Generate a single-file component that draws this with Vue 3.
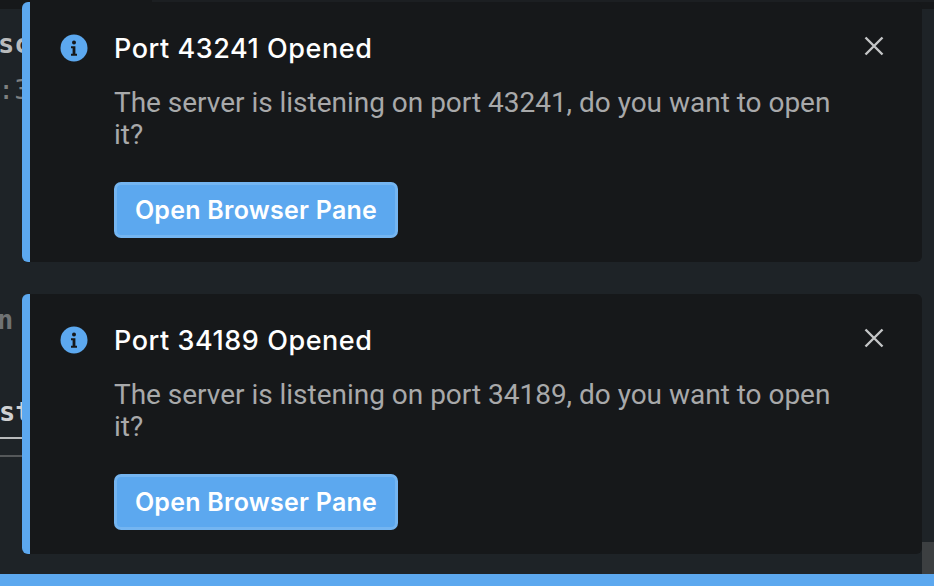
<template>
  <div class="screen">
    <div class="topbar"></div>
    <div class="topbar-tab"></div>

    <!-- what shows of the page behind the notifications -->
    <div class="behind">
      <span class="peek peek-sc">sc</span>
      <span class="peek peek-port">:3</span>
      <span class="peek peek-n">n</span>
      <span class="peek peek-st">st</span>
      <div class="peek-line"></div>
      <div class="peek-line2"></div>
    </div>

    <div class="scrollbar"></div>

    <div class="stack">
      <div v-for="port in ports" :key="port" class="toast">
        <div class="head">
          <svg class="info" viewBox="0 0 28 28" width="28" height="28">
            <circle cx="14" cy="14" r="13.5" fill="#5ca8ef" />
            <circle cx="14" cy="8.6" r="2" fill="#16181a" />
            <path d="M11 12.2h4.4v7.6h1.6v2h-6v-2h1.6v-5.6h-1.6z" fill="#16181a" />
          </svg>
          <div class="title">Port {{ port }} Opened</div>
          <svg class="close" viewBox="0 0 20 20" width="20" height="20">
            <path d="M1.5 1.5l17 17M18.5 1.5l-17 17" stroke="#c4c6c7" stroke-width="2.4" fill="none" />
          </svg>
        </div>
        <p class="message">The server is listening on port {{ port }}, do you want to open it?</p>
        <button class="open">Open Browser Pane</button>
      </div>
    </div>

    <div class="statusbar"></div>
  </div>
</template>

<script setup>
const ports = [43241, 34189]
</script>

<style>
html, body {
  margin: 0;
  background: #1e2327;
}
</style>

<style scoped>
.screen {
  position: relative;
  width: 934px;
  height: 586px;
  overflow: hidden;
  background: #1e2327;
  font-family: Roboto, sans-serif;
}

.topbar {
  height: 9px;
  background: #16181a;
}

.topbar-tab {
  position: absolute;
  top: 0;
  left: 152px;
  right: 0;
  height: 2px;
  background: #1c1f22;
}

.peek {
  position: absolute;
  left: 0;
  font-family: "DejaVu Sans Mono", monospace;
  font-weight: 700;
  font-size: 27px;
  line-height: 32px;
  color: #b9bbbc;
}

.peek-sc {
  top: 28px;
  left: -2px;
}

.peek-port {
  top: 74px;
  left: -2px;
  color: #7d8082;
  font-weight: 400;
}

.peek-n {
  top: 304px;
  left: -3px;
  color: #6f7274;
}

.peek-st {
  top: 396px;
  left: -1px;
  color: #d0d1d2;
}

.peek-line {
  position: absolute;
  top: 437px;
  left: 0;
  width: 22px;
  height: 2px;
  background: #b9bbbc;
}

.peek-line2 {
  position: absolute;
  top: 455px;
  left: 0;
  width: 22px;
  height: 2px;
  background: #55585a;
}

.scrollbar {
  position: absolute;
  top: 542px;
  right: 0;
  width: 12px;
  height: 32px;
  background: #3c3f41;
}

.stack {
  position: absolute;
  top: 2px;
  left: 22px;
  width: 900px;
  display: flex;
  flex-direction: column;
  gap: 32px;
}

.toast {
  box-sizing: border-box;
  height: 260px;
  padding: 30px 38px 0 30px;
  background: #16181a;
  border-left: 8px solid #5ca8ef;
  border-radius: 6px;
}

.head {
  display: flex;
  align-items: center;
  height: 32px;
}

.info {
  flex: none;
  margin-right: 26px;
}

.title {
  flex: 1;
  font-family: Inter, sans-serif;
  font-size: 27px;
  font-weight: 500;
  letter-spacing: 0.55px;
  color: #fff;
}

.close {
  flex: none;
  margin-top: -4px;
}

.message {
  width: 730px;
  margin: 23px 0 0 54px;
  font-size: 28px;
  line-height: 32px;
  letter-spacing: -0.02px;
  color: #a8a9aa;
}

.open {
  display: block;
  box-sizing: border-box;
  width: 284px;
  height: 56px;
  margin: 31px 0 0 54px;
  padding: 0;
  background: #5ca8ef;
  border: 3px solid #74b5f1;
  border-radius: 7px;
  font-family: Inter, sans-serif;
  font-size: 25px;
  font-weight: 600;
  letter-spacing: 0.25px;
  color: #fff;
}

.statusbar {
  position: absolute;
  left: 0;
  right: 0;
  bottom: 0;
  height: 12px;
  background: #5ca8ef;
}
</style>
